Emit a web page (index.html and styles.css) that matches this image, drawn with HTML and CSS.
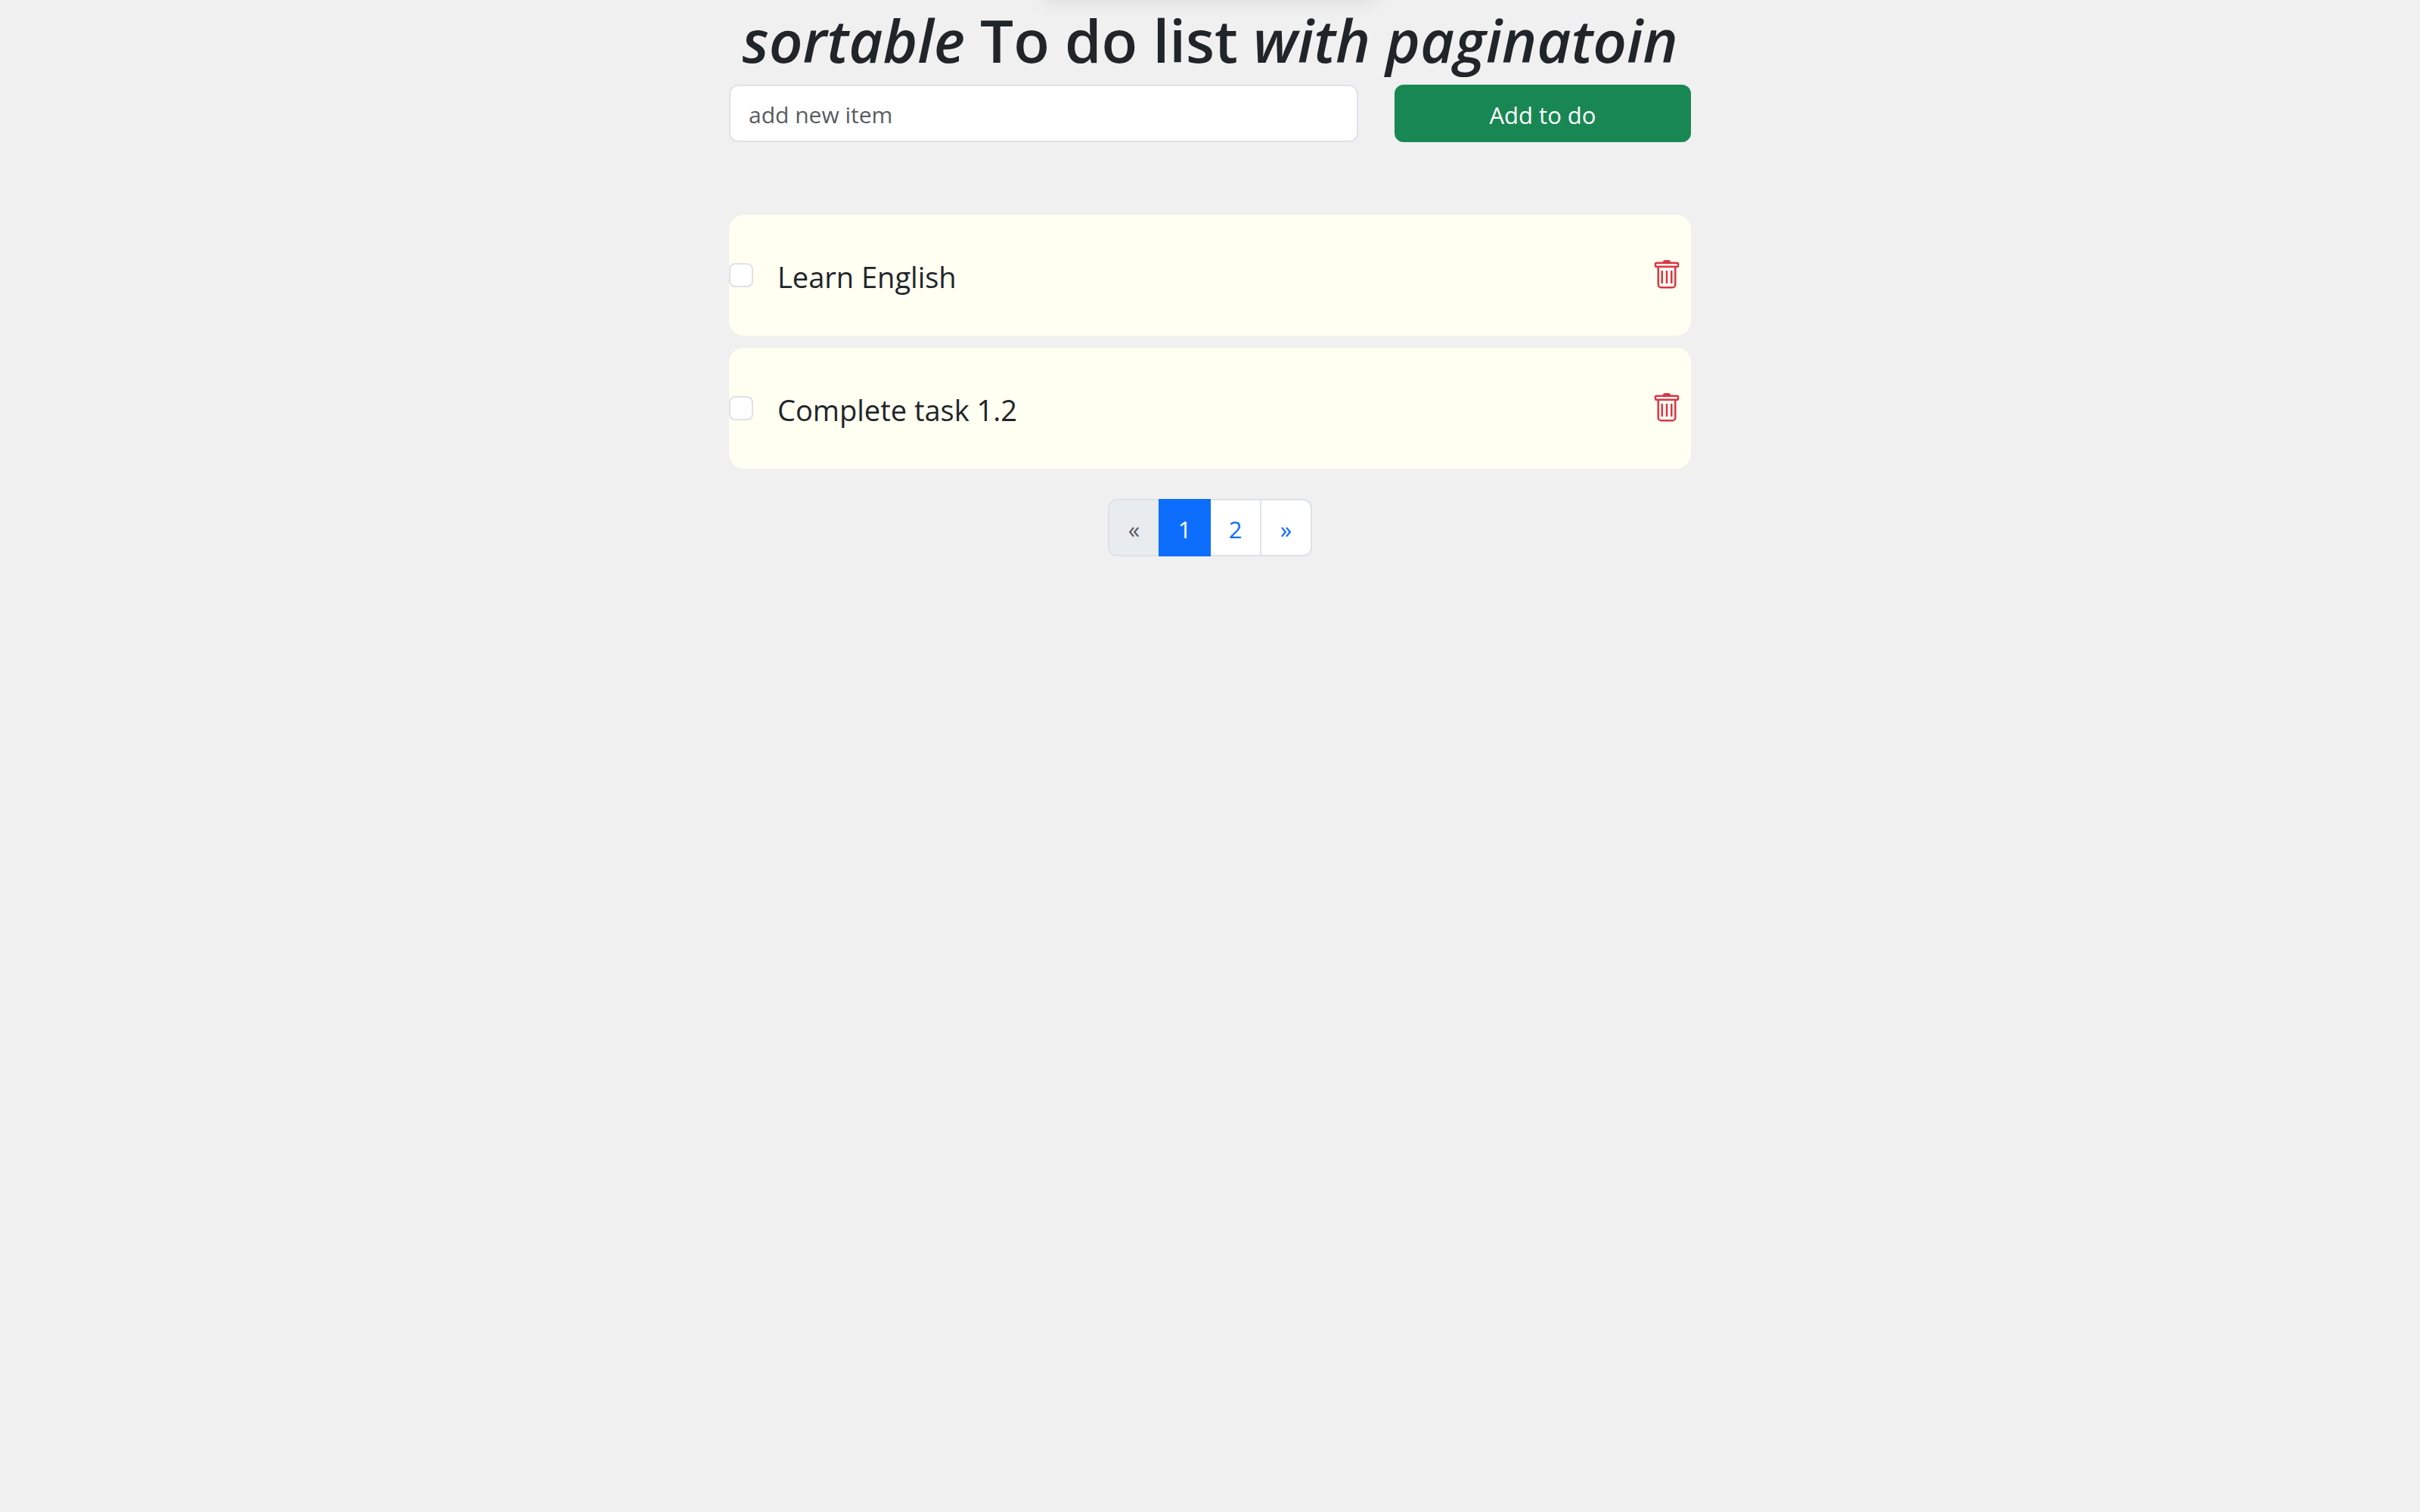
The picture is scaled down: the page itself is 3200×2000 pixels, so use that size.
FILE: index.html
```html
<!DOCTYPE html>
<html lang="en">
<head>
  <meta charset="utf-8">
  <meta name="viewport" content="width=device-width, initial-scale=1">
  <title>To do list</title>
  <link rel="stylesheet" href="styles.css">
</head>
<body>
  <div class="toast-edge" aria-hidden="true"></div>
  <main class="container">
    <h1 class="title"><em>sortable</em> To do list <em>with paginatoin</em></h1>

    <form class="add-form">
      <input class="add-input" type="text" placeholder="add new item" aria-label="add new item">
      <button class="add-button" type="submit">Add to do</button>
    </form>

    <ul class="todo-list">
      <li class="todo">
        <input class="todo-check" type="checkbox" id="todo-1">
        <label class="todo-label" for="todo-1">Learn English</label>
        <button class="todo-delete" type="button" aria-label="Delete">
          <svg class="icon" viewBox="0 0 16 16"><use href="#trash"/></svg>
        </button>
      </li>
      <li class="todo">
        <input class="todo-check" type="checkbox" id="todo-2">
        <label class="todo-label" for="todo-2">Complete task 1.2</label>
        <button class="todo-delete" type="button" aria-label="Delete">
          <svg class="icon" viewBox="0 0 16 16"><use href="#trash"/></svg>
        </button>
      </li>
    </ul>

    <nav aria-label="Pages">
      <ul class="pagination">
        <li><a class="page-link disabled" href="#" aria-label="Previous">«</a></li>
        <li><a class="page-link active" href="#" aria-current="page">1</a></li>
        <li><a class="page-link" href="#">2</a></li>
        <li><a class="page-link" href="#" aria-label="Next">»</a></li>
      </ul>
    </nav>
  </main>

  <svg class="sprite" aria-hidden="true">
    <symbol id="trash" viewBox="0 0 16 16">
      <path d="M5.5 5.5A.5.5 0 0 1 6 6v6a.5.5 0 0 1-1 0V6a.5.5 0 0 1 .5-.5m2.5 0a.5.5 0 0 1 .5.5v6a.5.5 0 0 1-1 0V6a.5.5 0 0 1 .5-.5m3 .5a.5.5 0 0 0-1 0v6a.5.5 0 0 0 1 0z"/>
      <path d="M14.5 3a1 1 0 0 1-1 1H13v9a2 2 0 0 1-2 2H5a2 2 0 0 1-2-2V4h-.5a1 1 0 0 1-1-1V2a1 1 0 0 1 1-1H6a1 1 0 0 1 1-1h2a1 1 0 0 1 1 1h3.5a1 1 0 0 1 1 1zM4.118 4 4 4.059V13a1 1 0 0 0 1 1h6a1 1 0 0 0 1-1V4.059L11.882 4zM2.5 3h11V2h-11z"/>
    </symbol>
  </svg>
</body>
</html>
```
FILE: styles.css
```css
*,
*::before,
*::after {
  box-sizing: border-box;
}

body {
  margin: 0;
  background: #f0f0f0;
  color: #212529;
  font-family: "Segoe UI", "Open Sans", "Noto Sans", sans-serif;
  font-size: 31px;
  line-height: 48px;
}

input,
button {
  font: inherit;
  margin: 0;
}

.container {
  max-width: 1320px;
  margin: 0 auto;
  padding: 0 24px;
}

.toast-edge {
  position: fixed;
  bottom: 100%;
  left: 50%;
  width: 440px;
  height: 80px;
  margin-left: -220px;
  box-shadow: 0 0 24px rgba(0, 0, 0, 0.1);
}

.title {
  margin: 0 0 6px;
  font-size: 78px;
  font-weight: 600;
  line-height: 106px;
  text-align: center;
}

.add-form {
  display: grid;
  grid-template-columns: minmax(0, 832fr) minmax(0, 392fr);
  gap: 48px;
  margin-bottom: 96px;
}

.add-input {
  width: 100%;
  padding: 14px 24px 10px;
  border: 2px solid #dee2e6;
  border-radius: 12px;
  background: #fff;
  color: #212529;
  font-size: 30px;
  line-height: 48px;
}

.add-input::placeholder {
  color: #595c5f;
  opacity: 1;
}

.add-button {
  padding: 14px 24px 10px;
  border: 2px solid #198754;
  border-radius: 12px;
  background: #198754;
  color: #fff;
}

.todo-list {
  display: flex;
  flex-direction: column;
  gap: 16px;
  margin: 0 0 40px;
  padding: 0;
  list-style: none;
}

.todo {
  display: flex;
  align-items: center;
  padding: 48px 12px 48px 0;
  border-radius: 20px;
  background: #fffff2;
}

.todo-check {
  appearance: none;
  flex: none;
  width: 32px;
  height: 32px;
  border: 2px solid #dee2e6;
  border-radius: 8px;
  background: #fff;
}

.todo-label {
  flex: 1;
  padding: 4px 0 0 32px;
  font-size: 38px;
  line-height: 60px;
}

.todo-delete {
  display: flex;
  padding: 0;
  border: 0;
  background: none;
  color: #dc3545;
}

.icon {
  width: 40px;
  height: 40px;
  fill: currentColor;
}

.sprite {
  display: none;
}

.pagination {
  display: flex;
  justify-content: center;
  margin: 0;
  padding: 0;
  list-style: none;
}

.page-link {
  display: block;
  min-width: 69px;
  padding: 14px 0 10px;
  border: 2px solid #dee2e6;
  background: #fff;
  color: #0d6efd;
  text-align: center;
  text-decoration: none;
}

.pagination li + li {
  margin-left: -2px;
}

.pagination li:first-child .page-link {
  border-radius: 12px 0 0 12px;
}

.pagination li:last-child .page-link {
  border-radius: 0 12px 12px 0;
}

.page-link.disabled {
  background: #e9ecef;
  color: #595c5f;
}

.page-link.active {
  position: relative;
  border-color: #0d6efd;
  background: #0d6efd;
  color: #fff;
}
```
